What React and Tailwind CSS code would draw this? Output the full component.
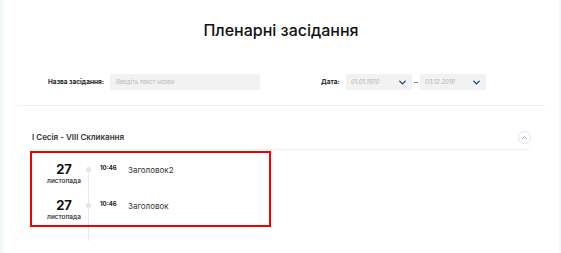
import React from 'react';

const Chevron = ({ className = '' }) => (
  <svg viewBox="0 0 10 6" className={className} fill="none">
    <path d="M1 1l4 4 4-4" stroke="currentColor" strokeWidth="1.8" strokeLinecap="round" strokeLinejoin="round" />
  </svg>
);

const sessions = [
  { day: '27', month: 'листопада', time: '10:46', title: 'Заголовок2' },
  { day: '27', month: 'листопада', time: '10:46', title: 'Заголовок' },
];

const DateSelect = ({ value }) => (
  <div className="w-[66px] h-[16px] bg-[#f2f2f2] rounded-[2px] flex items-center justify-between pl-[5px] pr-[6px]">
    <span className="text-[6px] italic text-[#b3b3b3] leading-none">{value}</span>
    <Chevron className="w-[7px] h-[5px] text-[#1c3d6b]" />
  </div>
);

export default function App() {
  return (
    <div className="h-[253px] w-full bg-[#f0f8fc] flex overflow-hidden" style={{ fontFamily: 'Inter, "Noto Sans", sans-serif' }}>
      <div className="ml-[3px] w-[556px] bg-white flex flex-col">
        <h1 className="pt-[20px] text-center text-[16px] leading-[20px] font-medium text-[#111]">
          Пленарні засідання
        </h1>

        <div className="mt-[34px] flex items-center h-[16px] pl-[45px]">
          <div className="w-[62px] text-[6.5px] font-bold text-[#222] leading-none">Назва засідання:</div>
          <div className="w-[150px] h-[16px] bg-[#f2f2f2] rounded-[2px] flex items-center pl-[6px]">
            <span className="text-[6px] italic text-[#b8b8b8] leading-none">Введіть текст назви</span>
          </div>
          <div className="ml-[61px] w-[25px] text-[6.5px] font-bold text-[#222] leading-none">Дата:</div>
          <DateSelect value="01.01.1970" />
          <div className="w-[8px] flex justify-center">
            <div className="w-[4px] h-px bg-[#888]" />
          </div>
          <DateSelect value="03.12.2018" />
        </div>

        <div className="mt-[15px] mx-[14px] h-px bg-[#f0f0f0]" />

        <div className="pl-[29px] pr-[29px]">
          <div className="mt-[24px] h-[14px] flex items-center justify-between">
            <span className="text-[8px] font-semibold text-[#333] leading-none">I Сесія - VIII Скликання</span>
            <div className="w-[13px] h-[13px] rounded-full border border-[#dde4ec] flex items-center justify-center mr-[-1px]">
              <Chevron className="w-[5px] h-[3px] text-[#7f98b8] rotate-180" />
            </div>
          </div>
          <div className="mt-[5px] h-px bg-[#eef2f5]" />

          <div className="relative pt-[10px]">
            {sessions.map((s, i) => (
              <div key={i} className="flex h-[36px]">
                <div className="ml-[12px] w-[40px] pt-[2px] flex flex-col items-center">
                  <span className="text-[13px] leading-[14px] font-bold text-[#111]">{s.day}</span>
                  <span className="mt-[1px] text-[6.5px] leading-[8px] font-medium text-[#222]">{s.month}</span>
                </div>
                <div className="relative w-[9px] flex justify-center">
                  <div className={`w-px bg-[#e3ebf0] ${i === 0 ? 'mt-[9px]' : ''}`} />
                  <div className="absolute top-[7px] left-[2px] w-[5px] h-[5px] rounded-full bg-[#dde7ee]" />
                </div>
                <div className="ml-[7px] w-[28px] pt-[4px] text-[6px] leading-[8px] font-bold text-[#222]">{s.time}</div>
                <div className="pt-[5px] text-[8px] leading-[10px] text-[#333]">{s.title}</div>
              </div>
            ))}
            <div className="ml-[52px] w-[9px] h-[9px] flex justify-center">
              <div className="w-px bg-[#e3ebf0]" />
            </div>
            <div className="absolute left-[-2px] top-[1px] w-[241px] h-[76px] border-2 border-[#f00000] pointer-events-none" />
          </div>
        </div>
      </div>
    </div>
  );
}
